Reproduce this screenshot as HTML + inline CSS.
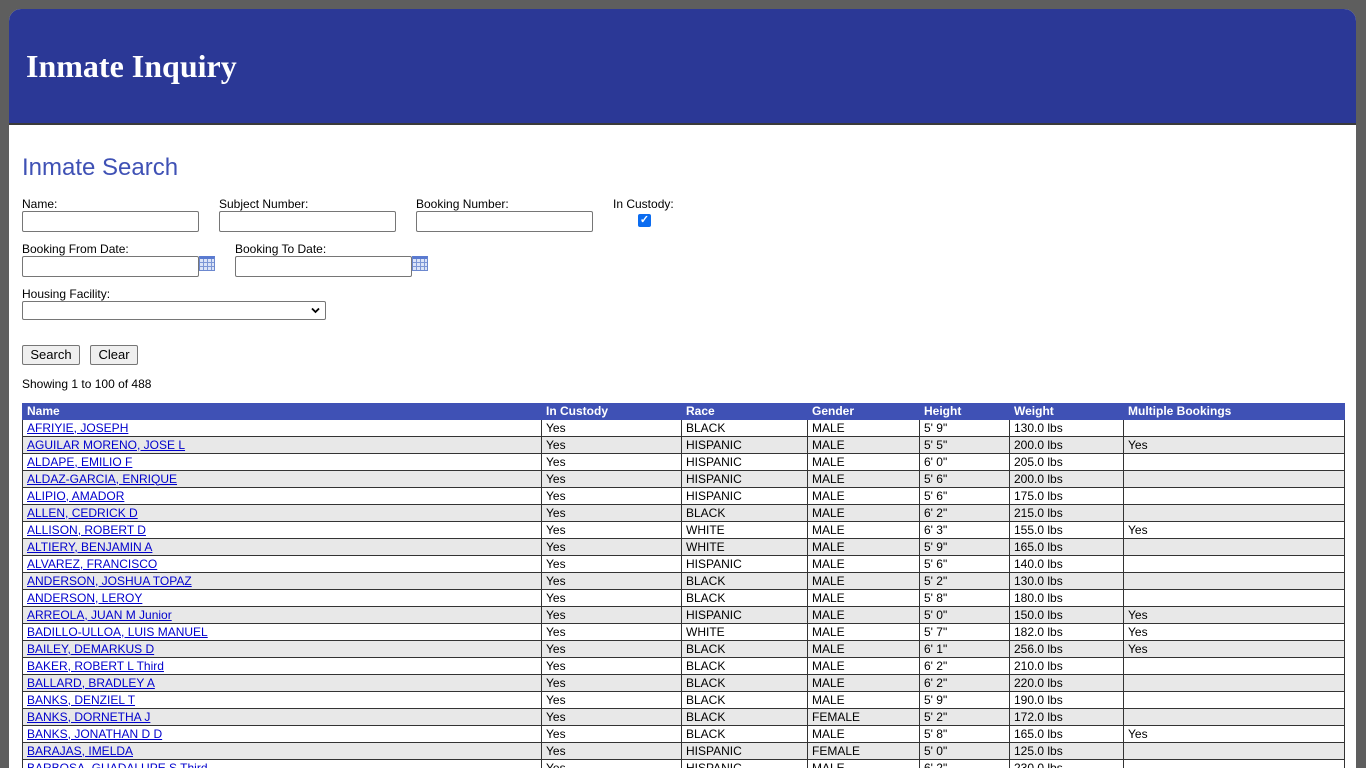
<!DOCTYPE html>
<html><head><meta charset="utf-8"><style>
html,body{margin:0;height:768px;overflow:hidden}
body{background:#5e5e5e;font-family:"Liberation Sans",Arial,sans-serif;width:1366px;position:relative}
.panel{position:absolute;left:9px;top:9px;width:1347px;height:759px;background:#fff;border-radius:12px 12px 0 0;overflow:hidden}
.hdr{position:absolute;left:0;top:0;width:100%;height:114px;background:#2b3896;border-bottom:2px solid #3a3a3a}
.hdr h1{position:absolute;left:17px;top:39px;margin:0;font-family:"Liberation Serif",serif;font-weight:bold;font-size:32px;color:#fff}
.abs{position:absolute;font-size:12px;color:#000}
h2{position:absolute;left:13px;top:145px;margin:0;font-weight:normal;font-size:24px;color:#3f51b5}
input.t{position:absolute;height:21px;border:1px solid #767676;border-radius:2px;box-sizing:border-box;width:177px;padding:0}
.cal{position:absolute;width:16px;height:15px;background:
linear-gradient(90deg,transparent 0 3px,#7d97d6 3px 4px,transparent 4px 7px,#7d97d6 7px 8px,transparent 8px 11px,#7d97d6 11px 12px,transparent 12px),
linear-gradient(0deg,transparent 0 3px,#7d97d6 3px 4px,transparent 4px 7px,#7d97d6 7px 8px,transparent 8px),#dbe4f7;border:1px solid #6c88cf;border-top:3px solid #5a7ad0;box-sizing:border-box}
.btn{position:absolute;height:20px;border:1px solid #767676;border-radius:2px;background:#efefef;font-size:13px;line-height:18px;text-align:center;box-sizing:border-box}
table{position:absolute;left:13px;top:394px;border-collapse:collapse;font-size:12px;table-layout:fixed}
td,th{border:1px solid #333;height:16px;padding:0 4px;text-align:left;white-space:nowrap;overflow:hidden;line-height:15px}
th{background:#3f51b5;color:#fff;font-weight:bold;height:14px;border-color:#3f51b5}
tr:nth-child(odd) td{background:#e8e8e8}
a{color:#00c;text-decoration:underline}
</style></head><body>
<div class="panel">
<div class="hdr"><h1>Inmate Inquiry</h1></div>
<h2>Inmate Search</h2>
<div class="abs" style="left:13px;top:188px">Name:</div>
<div class="abs" style="left:210px;top:188px">Subject Number:</div>
<div class="abs" style="left:407px;top:188px">Booking Number:</div>
<div class="abs" style="left:604px;top:188px">In Custody:</div>
<input class="t" style="left:13px;top:202px"><input class="t" style="left:210px;top:202px"><input class="t" style="left:407px;top:202px">
<div style="position:absolute;left:629px;top:205px;width:13px;height:13px;background:#0b6cf0;border-radius:2px;color:#fff;font-size:11px;line-height:13px;text-align:center;font-weight:bold">✓</div>
<div class="abs" style="left:13px;top:233px">Booking From Date:</div>
<div class="abs" style="left:226px;top:233px">Booking To Date:</div>
<input class="t" style="left:13px;top:247px"><div class="cal" style="left:190px;top:247px"></div>
<input class="t" style="left:226px;top:247px"><div class="cal" style="left:403px;top:247px"></div>
<div class="abs" style="left:13px;top:278px">Housing Facility:</div>
<div style="position:absolute;left:13px;top:292px;width:304px;height:19px;border:1px solid #767676;border-radius:2px;box-sizing:border-box"><svg style="position:absolute;right:5px;top:5px" width="9" height="7" viewBox="0 0 9 7"><path d="M1 1.5l3.5 3.5 3.5-3.5" stroke="#000" stroke-width="1.8" fill="none"/></svg></div>
<div class="btn" style="left:13px;top:336px;width:58px">Search</div>
<div class="btn" style="left:81px;top:336px;width:48px">Clear</div>
<div class="abs" style="left:13px;top:368px">Showing 1 to 100 of 488</div>
<table>
<colgroup><col style="width:519px"><col style="width:140px"><col style="width:126px"><col style="width:112px"><col style="width:90px"><col style="width:114px"><col style="width:221px"></colgroup>
<tr><th>Name</th><th>In Custody</th><th>Race</th><th>Gender</th><th>Height</th><th>Weight</th><th>Multiple Bookings</th></tr>
<tr><td><a>AFRIYIE, JOSEPH</a></td><td>Yes</td><td>BLACK</td><td>MALE</td><td>5' 9"</td><td>130.0 lbs</td><td></td></tr>
<tr><td><a>AGUILAR MORENO, JOSE L</a></td><td>Yes</td><td>HISPANIC</td><td>MALE</td><td>5' 5"</td><td>200.0 lbs</td><td>Yes</td></tr>
<tr><td><a>ALDAPE, EMILIO F</a></td><td>Yes</td><td>HISPANIC</td><td>MALE</td><td>6' 0"</td><td>205.0 lbs</td><td></td></tr>
<tr><td><a>ALDAZ-GARCIA, ENRIQUE</a></td><td>Yes</td><td>HISPANIC</td><td>MALE</td><td>5' 6"</td><td>200.0 lbs</td><td></td></tr>
<tr><td><a>ALIPIO, AMADOR</a></td><td>Yes</td><td>HISPANIC</td><td>MALE</td><td>5' 6"</td><td>175.0 lbs</td><td></td></tr>
<tr><td><a>ALLEN, CEDRICK D</a></td><td>Yes</td><td>BLACK</td><td>MALE</td><td>6' 2"</td><td>215.0 lbs</td><td></td></tr>
<tr><td><a>ALLISON, ROBERT D</a></td><td>Yes</td><td>WHITE</td><td>MALE</td><td>6' 3"</td><td>155.0 lbs</td><td>Yes</td></tr>
<tr><td><a>ALTIERY, BENJAMIN A</a></td><td>Yes</td><td>WHITE</td><td>MALE</td><td>5' 9"</td><td>165.0 lbs</td><td></td></tr>
<tr><td><a>ALVAREZ, FRANCISCO</a></td><td>Yes</td><td>HISPANIC</td><td>MALE</td><td>5' 6"</td><td>140.0 lbs</td><td></td></tr>
<tr><td><a>ANDERSON, JOSHUA TOPAZ</a></td><td>Yes</td><td>BLACK</td><td>MALE</td><td>5' 2"</td><td>130.0 lbs</td><td></td></tr>
<tr><td><a>ANDERSON, LEROY</a></td><td>Yes</td><td>BLACK</td><td>MALE</td><td>5' 8"</td><td>180.0 lbs</td><td></td></tr>
<tr><td><a>ARREOLA, JUAN M Junior</a></td><td>Yes</td><td>HISPANIC</td><td>MALE</td><td>5' 0"</td><td>150.0 lbs</td><td>Yes</td></tr>
<tr><td><a>BADILLO-ULLOA, LUIS MANUEL</a></td><td>Yes</td><td>WHITE</td><td>MALE</td><td>5' 7"</td><td>182.0 lbs</td><td>Yes</td></tr>
<tr><td><a>BAILEY, DEMARKUS D</a></td><td>Yes</td><td>BLACK</td><td>MALE</td><td>6' 1"</td><td>256.0 lbs</td><td>Yes</td></tr>
<tr><td><a>BAKER, ROBERT L Third</a></td><td>Yes</td><td>BLACK</td><td>MALE</td><td>6' 2"</td><td>210.0 lbs</td><td></td></tr>
<tr><td><a>BALLARD, BRADLEY A</a></td><td>Yes</td><td>BLACK</td><td>MALE</td><td>6' 2"</td><td>220.0 lbs</td><td></td></tr>
<tr><td><a>BANKS, DENZIEL T</a></td><td>Yes</td><td>BLACK</td><td>MALE</td><td>5' 9"</td><td>190.0 lbs</td><td></td></tr>
<tr><td><a>BANKS, DORNETHA J</a></td><td>Yes</td><td>BLACK</td><td>FEMALE</td><td>5' 2"</td><td>172.0 lbs</td><td></td></tr>
<tr><td><a>BANKS, JONATHAN D D</a></td><td>Yes</td><td>BLACK</td><td>MALE</td><td>5' 8"</td><td>165.0 lbs</td><td>Yes</td></tr>
<tr><td><a>BARAJAS, IMELDA</a></td><td>Yes</td><td>HISPANIC</td><td>FEMALE</td><td>5' 0"</td><td>125.0 lbs</td><td></td></tr>
<tr><td><a>BARBOSA, GUADALUPE S Third</a></td><td>Yes</td><td>HISPANIC</td><td>MALE</td><td>6' 2"</td><td>230.0 lbs</td><td></td></tr>
</table>
</div>
</body></html>
